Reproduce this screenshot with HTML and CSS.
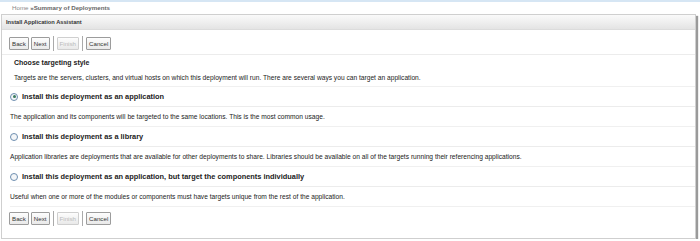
FILE: index.html
```html
<!DOCTYPE html>
<html lang="en">
<head>
  <meta charset="UTF-8" />
  <title>Install Application Assistant</title>
  <link rel="stylesheet" href="styles.css">
</head>
<body>
  <div class="topline"></div>
  <div class="crumbs"><span class="home">Home</span> <b>&raquo;Summary of Deployments</b></div>

  <div class="panel">
    <div class="panel-head">Install Application Assistant</div>

    <div class="btn-row">
      <button>Back</button>
      <button>Next</button>
      <span class="sep"></span>
      <button disabled>Finish</button>
      <span class="sep"></span>
      <button>Cancel</button>
    </div>

    <div class="section">
      <h2>Choose targeting style</h2>
      <p class="intro">Targets are the servers, clusters, and virtual hosts on which this deployment will run. There are several ways you can target an application.</p>

      <div class="option">
        <span class="radio checked"></span>
        <span class="label">Install this deployment as an application</span>
      </div>
      <p class="desc">The application and its components will be targeted to the same locations. This is the most common usage.</p>

      <div class="option">
        <span class="radio"></span>
        <span class="label">Install this deployment as a library</span>
      </div>
      <p class="desc">Application libraries are deployments that are available for other deployments to share. Libraries should be available on all of the targets running their referencing applications.</p>

      <div class="option">
        <span class="radio"></span>
        <span class="label">Install this deployment as an application, but target the components individually</span>
      </div>
      <p class="desc">Useful when one or more of the modules or components must have targets unique from the rest of the application.</p>
    </div>

    <div class="btn-row bottom">
      <button>Back</button>
      <button>Next</button>
      <span class="sep"></span>
      <button disabled>Finish</button>
      <span class="sep"></span>
      <button>Cancel</button>
    </div>
  </div>
</body>
</html>
```

FILE: styles.css
```css
* {
  box-sizing: border-box;
}
body {
  margin: 0;
  background: #fff;
  font-family: 'Liberation Sans', Arial, sans-serif;
  font-size: 6.65px;
  color: #222;
}

/* thin blue strip at the very top */
.topline {
  height: 2px;
  background: #d6e6f4;
}

/* Breadcrumb */
.crumbs {
  height: 12px;
  padding: 2px 0 0 12px;
  color: #888;
  font-size: 6.2px;
}
.crumbs b {
  color: #666;
}

/* Main panel */
.panel {
  margin: 0 4px 0 1px;
  border: 1px solid #cfcfcf;
  background: #fff;
  box-shadow: 2px 2px 1px #9a9a9a;
  padding-bottom: 12px;
}
.panel-head {
  height: 15px;
  padding: 3px 0 0 4px;
  font-weight: bold;
  font-size: 5.7px;
  line-height: 9px;
  color: #333;
  background: linear-gradient(#fafafa, #e4e4e4);
  border-bottom: 1px solid #dcdcdc;
}

/* Button rows */
.btn-row {
  display: flex;
  align-items: center;
  gap: 2px;
  padding: 6px 0 3px 7px;
  border-bottom: 1px solid #ececec;
}
.btn-row.bottom {
  border-bottom: none;
  padding: 4px 0 0 7px;
}
button {
  font-family: inherit;
  font-size: 6.2px;
  color: #333;
  height: 13px;
  padding: 0 2px;
  background: linear-gradient(#fdfdfd, #e9e9e9);
  border: 1px solid #9c9c9c;
  border-radius: 1px;
}
button:disabled {
  color: #bbb;
  border-color: #cfcfcf;
}
.sep {
  width: 1px;
  height: 15px;
  background: #aaa;
  margin: 0 1px;
}

/* Content */
.section {
  padding: 0 0 0 8px;
}
h2 {
  margin: 0;
  height: 15px;
  line-height: 15px;
  padding-left: 4px;
  font-size: 7px;
  font-weight: bold;
  color: #222;
}
p {
  margin: 0;
}
.intro {
  height: 17px;
  line-height: 16px;
  padding-left: 4px;
  border-bottom: 1px solid #f0f0f0;
}
.option {
  display: flex;
  align-items: center;
  gap: 4px;
  height: 20px;
  border-bottom: 1px solid #ececec;
}
.label {
  font-weight: bold;
  font-size: 7.4px;
  color: #222;
}
.radio {
  width: 8px;
  height: 8px;
  border-radius: 50%;
  border: 1px solid #6f8fb0;
  background: #f4f6f8;
  display: flex;
  align-items: center;
  justify-content: center;
}
.radio.checked::after {
  content: "";
  width: 3px;
  height: 3px;
  border-radius: 50%;
  background: #3a7a5c;
}
.desc {
  height: 20px;
  display: flex;
  align-items: center;
  border-bottom: 1px solid #f0f0f0;
}
```
